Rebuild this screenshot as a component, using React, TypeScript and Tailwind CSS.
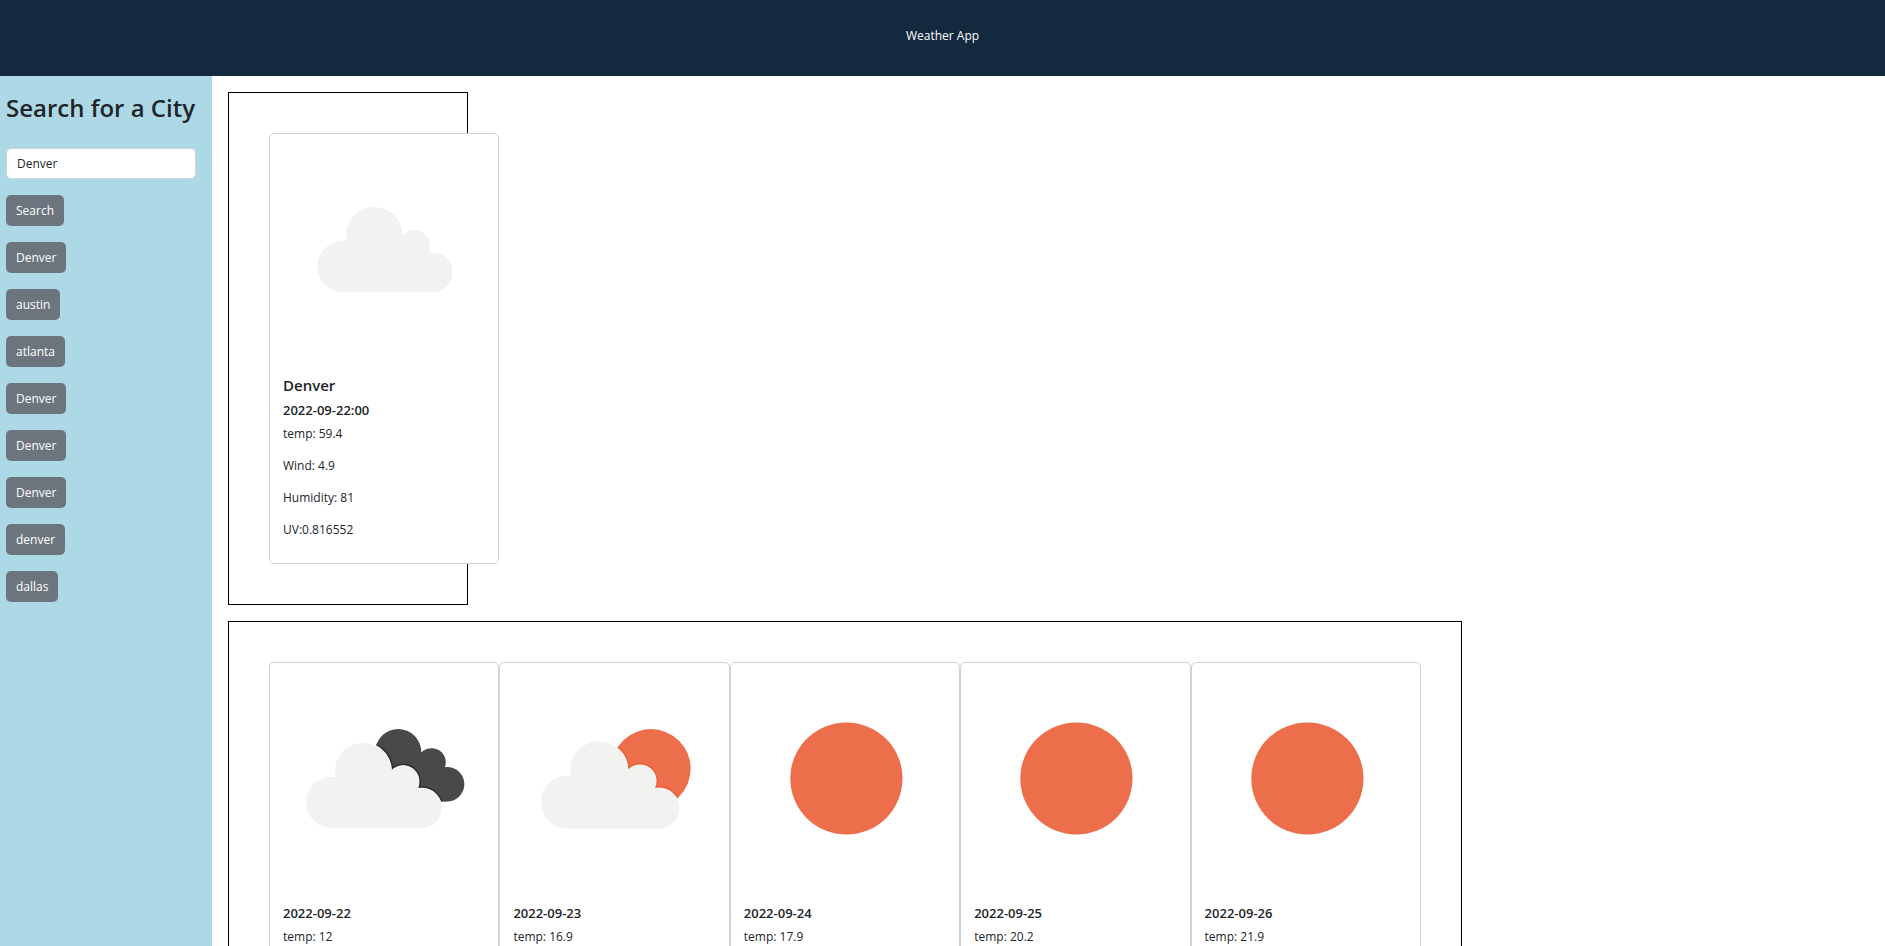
import { useId, useState } from "react";
import type { ReactNode } from "react";

type IconKind = "cloud" | "broken" | "partly" | "sun";

function CloudShape() {
  return (
    <>
      <circle cx="73" cy="132.4" r="25.6" />
      <circle cx="104.3" cy="101.2" r="28.2" />
      <circle cx="144.3" cy="111.6" r="15.7" />
      <circle cx="162.8" cy="138.2" r="19.8" />
      <path d="M73 158V120L90 108H150L162 122V158Z" />
    </>
  );
}

function DarkCloudShape() {
  return (
    <>
      <circle cx="128" cy="89" r="23" />
      <circle cx="161.3" cy="99.2" r="14.2" />
      <circle cx="176.7" cy="121" r="17.3" />
      <path d="M106 82L115 100L150 92L176 106V138.3H130Z" />
    </>
  );
}

function WeatherIcon({ kind, label }: { kind: IconKind; label: string }) {
  const id = useId();
  const soft = `soft${id}`;
  const clip = `clip${id}`;
  return (
    <svg viewBox="0 0 228 228" role="img" aria-label={label} className="block w-full">
      <defs>
        <filter id={soft}>
          <feGaussianBlur stdDeviation="0.7" />
        </filter>
        <clipPath id={clip}>
          {kind === "partly" ? <circle cx="150.7" cy="105.6" r="39.6" /> : <DarkCloudShape />}
        </clipPath>
      </defs>
      <g filter={`url(#${soft})`}>
        {kind === "sun" && <circle cx="115.2" cy="115.3" r="56" fill="#ed6e4c" />}
        {kind === "cloud" && (
          <g fill="#f2f2f0">
            <CloudShape />
          </g>
        )}
        {kind === "broken" && (
          <>
            <g fill="#484849">
              <DarkCloudShape />
            </g>
            <g clipPath={`url(#${clip})`}>
              <g transform="translate(-11.3 6.7)" fill="#2c2c2e" stroke="#2c2c2e" strokeWidth="4">
                <CloudShape />
              </g>
            </g>
            <g transform="translate(-11.3 6.7)">
              <g fill="#fff" stroke="#fff" strokeWidth="1">
                <CloudShape />
              </g>
              <g fill="#f2f2f0">
                <CloudShape />
              </g>
            </g>
          </>
        )}
        {kind === "partly" && (
          <>
            <circle cx="150.7" cy="105.6" r="39.6" fill="#ed6e4c" />
            <g clipPath={`url(#${clip})`}>
              <g transform="translate(-7 4.3) scale(1.017)" fill="#ee5f38" stroke="#ee5f38" strokeWidth="4">
                <CloudShape />
              </g>
            </g>
            <g transform="translate(-7 4.3) scale(1.017)">
              <g fill="#f3f9fb" stroke="#f3f9fb" strokeWidth="1">
                <CloudShape />
              </g>
              <g fill="#f2f2f0">
                <CloudShape />
              </g>
            </g>
          </>
        )}
      </g>
    </svg>
  );
}

function Card({ kind, label, children }: { kind: IconKind; label: string; children: ReactNode }) {
  return (
    <article className="rounded-[5px] border border-[#d2d2d2] bg-white">
      <WeatherIcon kind={kind} label={label} />
      <div className="px-[13px] pt-[14px] pb-[11px]">{children}</div>
    </article>
  );
}

const history = ["Denver", "austin", "atlanta", "Denver", "Denver", "Denver", "denver", "dallas"];

const forecast: { date: string; temp: string; kind: IconKind; label: string }[] = [
  { date: "2022-09-22", temp: "12", kind: "broken", label: "Broken clouds" },
  { date: "2022-09-23", temp: "16.9", kind: "partly", label: "Few clouds" },
  { date: "2022-09-24", temp: "17.9", kind: "sun", label: "Clear sky" },
  { date: "2022-09-25", temp: "20.2", kind: "sun", label: "Clear sky" },
  { date: "2022-09-26", temp: "21.9", kind: "sun", label: "Clear sky" },
];

const current = ["temp: 59.4", "Wind: 4.9", "Humidity: 81", "UV:0.816552"];

const buttonClass =
  "h-[31px] cursor-pointer rounded-[5px] bg-[#6c757d] px-[10px] text-[12px] leading-[19px] text-white hover:bg-[#5c636a]";

const dateClass = "mb-[6px] text-[13px] leading-[16px] font-semibold";

export default function App() {
  const [city, setCity] = useState("Denver");

  return (
    <div className="flex min-h-screen flex-col bg-white font-['Segoe_UI','Open_Sans',sans-serif] text-[12px] leading-[19px] text-[#212529]">
      <header className="flex h-[76px] items-center justify-center bg-[#13293d] pb-[6px] text-white">
        <h1>Weather App</h1>
      </header>
      <div className="flex grow">
        <aside className="w-[212px] shrink-0 bg-[#add8e6] pt-[16px] pr-[16px] pl-[6px]">
          <form onSubmit={(e) => e.preventDefault()} className="flex flex-col items-start gap-[16px]">
            <label htmlFor="city" className="mb-[8px] text-[24px] leading-[32px] font-semibold whitespace-nowrap">
              Search for a City
            </label>
            <input
              id="city"
              type="text"
              value={city}
              onChange={(e) => setCity(e.target.value)}
              className="h-[31px] w-full rounded-[5px] border border-[#ced4da] bg-white px-[10px]"
            />
            <button type="submit" className={buttonClass}>
              Search
            </button>
            {history.map((name, i) => (
              <button key={i} type="button" onClick={() => setCity(name)} className={buttonClass}>
                {name}
              </button>
            ))}
          </form>
        </aside>
        <main className="flex min-w-0 grow flex-col items-start gap-[16px] p-[16px]">
          <section className="w-[240px] border border-black p-[40px]">
            <div className="w-[230px]">
              <Card kind="cloud" label="Cloudy">
                <h2 className="mb-[7px] text-[15px] font-semibold">Denver</h2>
                <h3 className={dateClass}>2022-09-22:00</h3>
                {current.map((line) => (
                  <p key={line} className="mb-[13px]">
                    {line}
                  </p>
                ))}
              </Card>
            </div>
          </section>
          <section className="w-[1234px] border border-black p-[40px]">
            <div className="grid grid-cols-5">
              {forecast.map((day) => (
                <Card key={day.date} kind={day.kind} label={day.label}>
                  <h3 className={dateClass}>{day.date}</h3>
                  <p>temp: {day.temp}</p>
                </Card>
              ))}
            </div>
          </section>
        </main>
      </div>
    </div>
  );
}
